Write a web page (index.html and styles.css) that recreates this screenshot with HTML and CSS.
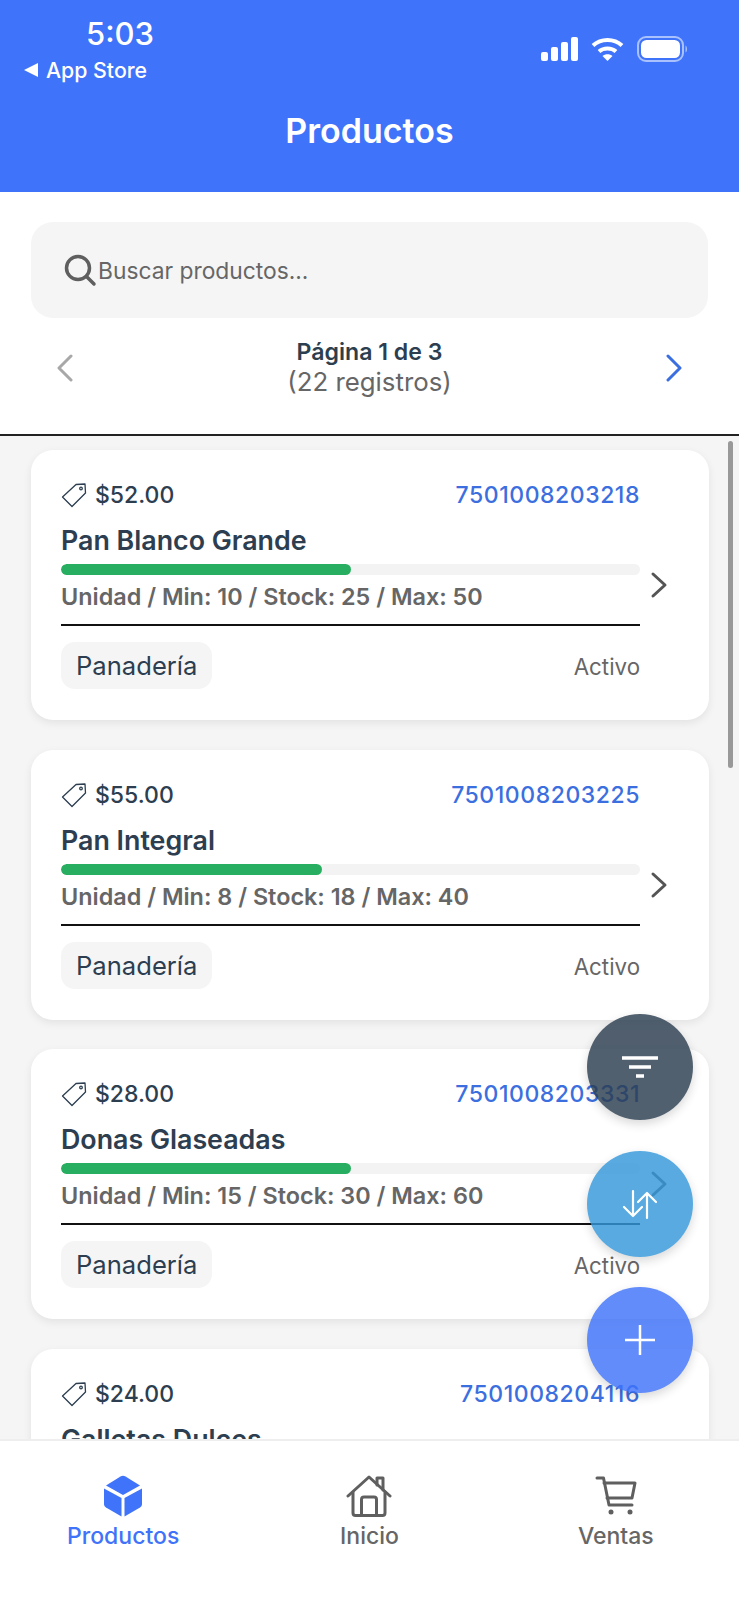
FILE: index.html
```html
<!DOCTYPE html>
<html lang="en">
<head>
    <meta charset="UTF-8">
    <meta name="viewport" content="width=device-width, initial-scale=1.0">
    <title>Productos</title>
    <link rel="stylesheet" href="styles.css">
</head>
<body>
    <header class="app-header">
        <div class="status-bar">
            <div class="status-left">
                <div class="status-time">5:03</div>
                <div class="status-back"><span class="back-arrow"></span>App Store</div>
            </div>
            <div class="status-right">
                <svg width="38" height="26" viewBox="0 0 38 26" fill="#fff">
                    <rect x="1" y="16" width="7" height="9" rx="2"/>
                    <rect x="11" y="11" width="7" height="14" rx="2"/>
                    <rect x="21" y="6" width="7" height="19" rx="2"/>
                    <rect x="31" y="1" width="7" height="24" rx="2"/>
                </svg>
                <svg width="33" height="26" viewBox="0 0 33 26" fill="none" stroke="#fff" stroke-width="4">
                    <path d="M2 9.5C10 2 23 2 31 9.5"/>
                    <path d="M8 15.5C12.500 11.500 20.500 11.500 25 15.500"/>
                    <path d="M16.500 25L11.500 20C14 17.500 19 17.500 21.500 20Z" fill="#fff" stroke="none"/>
                </svg>
                <svg class="battery" width="52" height="26" viewBox="0 0 52 26">
                    <rect x="1" y="1" width="45" height="24" rx="8" fill="none" stroke="#a9c1fc" stroke-width="2"/>
                    <rect x="4" y="4" width="39" height="18" rx="5.500" fill="#fff"/>
                    <path d="M48.500 9.500C50.500 10.500 50.500 15.500 48.500 16.500Z" fill="#a9c1fc"/>
                </svg>
            </div>
        </div>
        <h1 class="header-title">Productos</h1>
    </header>

    <section class="search-panel">
        <div class="search-box">
            <svg width="34" height="34" viewBox="0 0 34 34" fill="none" stroke="#5f5f5f" stroke-width="3.500" stroke-linecap="round">
                <circle cx="15" cy="15" r="11.500"/>
                <path d="M23.500 23.500L31 31"/>
            </svg>
            <span>Buscar productos...</span>
        </div>
        <div class="pager">
            <svg width="18" height="28" viewBox="0 0 18 28" fill="none" stroke="#a8a8a8" stroke-width="3" stroke-linecap="round" stroke-linejoin="round">
                <path d="M15 2L3 14L15 26"/>
            </svg>
            <div class="pager-text">
                <strong>Página 1 de 3</strong>
                <span>(22 registros)</span>
            </div>
            <svg width="18" height="28" viewBox="0 0 18 28" fill="none" stroke="#3b6fe0" stroke-width="3" stroke-linecap="round" stroke-linejoin="round">
                <path d="M3 2L15 14L3 26"/>
            </svg>
        </div>
    </section>

    <main class="product-list">
        <div class="scroll-thumb"></div>

        <article class="card">
            <div class="card-body">
                <div class="card-top">
                    <span class="price">
                        <svg class="tag-icon" width="26" height="26" viewBox="0 0 26 26" fill="none" stroke="#2c3e50" stroke-width="1.300" stroke-linejoin="round">
                            <path d="M15 2.500L24 2L24.500 11L11 24.500L1.500 15Z"/>
                            <circle cx="20" cy="6.500" r="1.300"/>
                        </svg>
                        $52.00
                    </span>
                    <span class="barcode">7501008203218</span>
                </div>
                <h2 class="name">Pan Blanco Grande</h2>
                <div class="bar"><div class="bar-fill" style="width: 50%"></div></div>
                <div class="meta">Unidad / Min: 10 / Stock: 25 / Max: 50</div>
                <div class="card-bottom">
                    <span class="category">Panadería</span>
                    <span class="state">Activo</span>
                </div>
            </div>
            <svg class="chevron" width="18" height="28" viewBox="0 0 18 28" fill="none" stroke="#555" stroke-width="3" stroke-linecap="round" stroke-linejoin="round">
                <path d="M3 3L15 14L3 25"/>
            </svg>
        </article>

        <article class="card">
            <div class="card-body">
                <div class="card-top">
                    <span class="price">
                        <svg class="tag-icon" width="26" height="26" viewBox="0 0 26 26" fill="none" stroke="#2c3e50" stroke-width="1.300" stroke-linejoin="round">
                            <path d="M15 2.500L24 2L24.500 11L11 24.500L1.500 15Z"/>
                            <circle cx="20" cy="6.500" r="1.300"/>
                        </svg>
                        $55.00
                    </span>
                    <span class="barcode">7501008203225</span>
                </div>
                <h2 class="name">Pan Integral</h2>
                <div class="bar"><div class="bar-fill" style="width: 45%"></div></div>
                <div class="meta">Unidad / Min: 8 / Stock: 18 / Max: 40</div>
                <div class="card-bottom">
                    <span class="category">Panadería</span>
                    <span class="state">Activo</span>
                </div>
            </div>
            <svg class="chevron" width="18" height="28" viewBox="0 0 18 28" fill="none" stroke="#555" stroke-width="3" stroke-linecap="round" stroke-linejoin="round">
                <path d="M3 3L15 14L3 25"/>
            </svg>
        </article>

        <article class="card">
            <div class="card-body">
                <div class="card-top">
                    <span class="price">
                        <svg class="tag-icon" width="26" height="26" viewBox="0 0 26 26" fill="none" stroke="#2c3e50" stroke-width="1.300" stroke-linejoin="round">
                            <path d="M15 2.500L24 2L24.500 11L11 24.500L1.500 15Z"/>
                            <circle cx="20" cy="6.500" r="1.300"/>
                        </svg>
                        $28.00
                    </span>
                    <span class="barcode">7501008203331</span>
                </div>
                <h2 class="name">Donas Glaseadas</h2>
                <div class="bar"><div class="bar-fill" style="width: 50%"></div></div>
                <div class="meta">Unidad / Min: 15 / Stock: 30 / Max: 60</div>
                <div class="card-bottom">
                    <span class="category">Panadería</span>
                    <span class="state">Activo</span>
                </div>
            </div>
            <svg class="chevron" width="18" height="28" viewBox="0 0 18 28" fill="none" stroke="#555" stroke-width="3" stroke-linecap="round" stroke-linejoin="round">
                <path d="M3 3L15 14L3 25"/>
            </svg>
        </article>

        <article class="card">
            <div class="card-body">
                <div class="card-top">
                    <span class="price">
                        <svg class="tag-icon" width="26" height="26" viewBox="0 0 26 26" fill="none" stroke="#2c3e50" stroke-width="1.300" stroke-linejoin="round">
                            <path d="M15 2.500L24 2L24.500 11L11 24.500L1.500 15Z"/>
                            <circle cx="20" cy="6.500" r="1.300"/>
                        </svg>
                        $24.00
                    </span>
                    <span class="barcode">7501008204116</span>
                </div>
                <h2 class="name">Galletas Dulces</h2>
            </div>
        </article>

        <button class="fab fab-filter">
            <svg width="36" height="24" viewBox="0 0 36 24" fill="none" stroke="#fff" stroke-width="3.500">
                <path d="M0 3H36M7 12H29M14 21H22"/>
            </svg>
        </button>
        <button class="fab fab-swap">
            <svg width="36" height="36" viewBox="0 0 36 36" fill="none" stroke="#fff" stroke-width="2.200" stroke-linecap="round" stroke-linejoin="round">
                <path d="M11 5V30M2 21L11 30L20 21"/>
                <path d="M25 32V7M16 16L25 7L34 16"/>
            </svg>
        </button>
        <button class="fab fab-add">
            <svg width="30" height="30" viewBox="0 0 30 30" fill="none" stroke="#fff" stroke-width="2.500">
                <path d="M15 0V30M0 15H30"/>
            </svg>
        </button>
    </main>

    <nav class="tab-bar">
        <div class="tab tab-active">
            <svg width="42" height="42" viewBox="0 0 42 42" fill="#3f73fa">
                <path d="M18.500 1.500C20 .6 22 .6 23.500 1.500L38 10.500L21 20L4 10.500Z"/>
                <path d="M2 13.500L19.500 23V41.500L4 32.500C2.700 31.700 2 30.500 2 29Z"/>
                <path d="M40 13.500L22.500 23V41.500L38 32.500C39.300 31.700 40 30.500 40 29Z"/>
            </svg>
            <span>Productos</span>
        </div>
        <div class="tab">
            <svg width="46" height="42" viewBox="0 0 46 42" fill="none" stroke="#5f5f5f" stroke-width="3" stroke-linecap="round" stroke-linejoin="round">
                <path d="M2 21L23 2L44 21"/>
                <path d="M7 17V38C7 39.500 8 40.500 9.500 40.500H36.500C38 40.500 39 39.500 39 38V17"/>
                <path d="M15.500 40V24.500C15.500 23 16.500 22 18 22H28C29.500 22 30.500 23 30.500 24.500V40"/>
                <path d="M31 10V3H37V15"/>
            </svg>
            <span>Inicio</span>
        </div>
        <div class="tab">
            <svg width="42" height="42" viewBox="0 0 42 42" fill="none" stroke="#5f5f5f" stroke-width="3" stroke-linecap="round" stroke-linejoin="round">
                <path d="M2 3H8.500L14 30H37"/>
                <path d="M9 8H40L37 23H12"/>
                <circle cx="16" cy="37" r="2.500" fill="#5f5f5f" stroke="none"/>
                <circle cx="35" cy="37" r="2.500" fill="#5f5f5f" stroke="none"/>
            </svg>
            <span>Ventas</span>
        </div>
    </nav>
</body>
</html>
```

FILE: styles.css
```css
* {
    box-sizing: border-box;
}

body {
    font-family: 'Inter', sans-serif;
    margin: 0;
    padding: 0;
    width: 739px;
    height: 1600px;
    display: flex;
    flex-direction: column;
    overflow: hidden;
    background: #fff;
    color: #2c3e50;
}

.app-header {
    height: 192px;
    flex-shrink: 0;
    background: #3f73fa;
    color: #fff;
}

.status-bar {
    display: flex;
    justify-content: space-between;
    height: 111px;
    padding: 15px 50px 0 24px;
}

.status-left {
    display: flex;
    flex-direction: column;
}

.status-time {
    margin-left: 62px;
    font-size: 31px;
    line-height: 38px;
    font-weight: 500;
}

.status-back {
    display: flex;
    align-items: center;
    margin-top: 3px;
    font-size: 21.3px;
    line-height: 28px;
    font-weight: 500;
}

.back-arrow {
    width: 0;
    height: 0;
    margin-right: 8px;
    border-top: 7px solid transparent;
    border-bottom: 7px solid transparent;
    border-right: 14px solid #fff;
}

.status-right {
    display: flex;
    gap: 13px;
    padding-top: 21px;
    height: 47px;
}

.header-title {
    margin: 0;
    font-size: 34px;
    line-height: 40px;
    font-weight: 600;
    text-align: center;
}

.search-panel {
    height: 244px;
    flex-shrink: 0;
    padding: 30px 31px 0;
    background: #fff;
    border-bottom: 2px solid #222;
}

.search-box {
    display: flex;
    align-items: center;
    gap: 1px;
    height: 96px;
    padding: 0 32px;
    border-radius: 22px;
    background: #f5f5f5;
    color: #666;
    font-size: 22.8px;
}

.pager {
    display: flex;
    justify-content: space-between;
    align-items: center;
    padding: 19px 25px 0 25px;
}

.pager svg {
    margin-top: 2px;
}

.pager-text {
    display: flex;
    flex-direction: column;
    align-items: center;
    font-size: 25.8px;
    line-height: 30px;
    color: #666;
}

.pager-text strong {
    font-size: 23.1px;
    font-weight: 600;
    color: #2c3e50;
}

.product-list {
    position: relative;
    flex: 1;
    overflow: hidden;
    display: flex;
    flex-direction: column;
    gap: 29.7px;
    padding: 14px 30px 0 31px;
    background: #f5f5f5;
}

.scroll-thumb {
    position: absolute;
    top: 5px;
    left: 728px;
    width: 5px;
    height: 327px;
    border-radius: 3px;
    background: #999;
}

.card {
    display: flex;
    flex-shrink: 0;
    height: 270px;
    padding: 28px 12px 0 30px;
    border-radius: 22px;
    background: #fff;
    box-shadow: 0 3px 8px rgba(0, 0, 0, 0.08);
}

.card-body {
    width: 579px;
    flex-shrink: 0;
}

.card-top {
    display: flex;
    justify-content: space-between;
    align-items: center;
    height: 34px;
    font-size: 23px;
    font-weight: 500;
}

.price {
    display: flex;
    align-items: center;
    gap: 8px;
}

.barcode {
    color: #3b6fe0;
    letter-spacing: 0.55px;
}

.name {
    margin: 11px 0 0;
    font-size: 26.8px;
    line-height: 34px;
    font-weight: 600;
}

.bar {
    height: 11px;
    margin-top: 7px;
    border-radius: 6px;
    background: #f3f3f3;
    overflow: hidden;
}

.bar-fill {
    height: 100%;
    border-radius: 6px;
    background: #27ae60;
}

.meta {
    height: 51px;
    padding-top: 6px;
    border-bottom: 2px solid #111;
    font-size: 23.4px;
    line-height: 32px;
    font-weight: 600;
    color: #666;
}

.card-bottom {
    display: flex;
    justify-content: space-between;
    align-items: center;
    margin-top: 16px;
}

.category {
    height: 47px;
    padding: 0 15px;
    border-radius: 14px;
    background: #f5f5f5;
    font-size: 25.6px;
    line-height: 47px;
}

.state {
    margin-top: 2px;
    font-size: 22.3px;
    color: #666;
}

.chevron {
    margin: 93px 0 0 10px;
}

.fab {
    position: absolute;
    left: 587px;
    width: 106px;
    height: 106px;
    display: flex;
    justify-content: center;
    align-items: center;
    padding: 0;
    border: none;
    border-radius: 50%;
    box-shadow: 0 4px 10px rgba(0, 0, 0, 0.18);
    opacity: 0.82;
}

.fab-filter {
    top: 578px;
    background: #2c3e50;
}

.fab-swap {
    top: 715px;
    background: #3498db;
}

.fab-add {
    top: 851px;
    background: #3f73fa;
}

.tab-bar {
    height: 161px;
    flex-shrink: 0;
    display: flex;
    padding-top: 34px;
    border-top: 2px solid #eee;
    background: #fff;
}

.tab {
    flex: 1;
    display: flex;
    flex-direction: column;
    align-items: center;
    gap: 4px;
    font-size: 23px;
    line-height: 30px;
    font-weight: 500;
    color: #666;
}

.tab svg {
    display: block;
}

.tab-active {
    color: #3f73fa;
}
```
